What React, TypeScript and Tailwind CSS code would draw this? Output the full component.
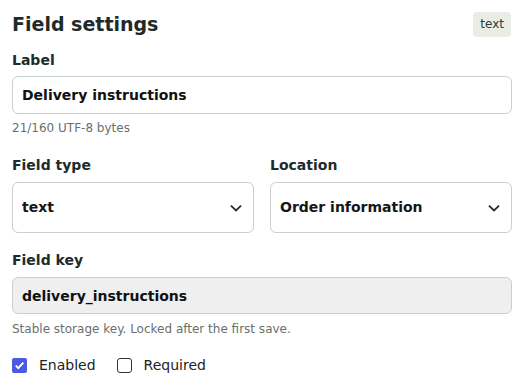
import React from "react";

function Chevron() {
  return (
    <svg width="12" height="8" viewBox="0 0 12 8" className="shrink-0">
      <path d="M0.9 1.6 L6 6.4 L11.1 1.6" fill="none" stroke="#2a2a2a" strokeWidth="1.8" />
    </svg>
  );
}

function Select({ value }: { value: string }) {
  return (
    <div className="h-[51px] rounded-[6px] border border-[#c8d1cd] bg-white pl-[9px] pr-[11px] flex items-center justify-between">
      <span className="text-[14px] leading-[20px] font-bold text-[#161616] -mt-[2px]">{value}</span>
      <Chevron />
    </div>
  );
}

export default function App() {
  return (
    <div className="w-[524px] h-[391px] bg-white px-3 pt-[10px] text-[#1e2b2b]" style={{ fontFamily: '"DejaVu Sans", sans-serif' }}>
      <div className="flex items-center justify-between">
        <h1 className="text-[19px] leading-[28px] font-bold text-[#1d2b2b]">Field settings</h1>
        <span className="h-[25px] px-[7px] flex items-center rounded-[4px] bg-[#e8ede6] text-[12px] text-[#2e3a36] mr-[1px]">text</span>
      </div>

      <div className="mt-[12px] text-[14px] leading-[20px] font-bold">Label</div>
      <div className="mt-[6px] h-[38px] rounded-[6px] border border-[#c8d1cd] bg-white pl-[9px] flex items-center">
        <span className="text-[14px] leading-[20px] font-bold text-[#111]">Delivery instructions</span>
      </div>
      <div className="mt-[6px] text-[12px] leading-[16px] text-[#6a6f6d]">21/160 UTF-8 bytes</div>

      <div className="mt-[19px] grid grid-cols-2 gap-4">
        <div>
          <div className="text-[14px] leading-[20px] font-bold">Field type</div>
          <div className="mt-[7px]">
            <Select value="text" />
          </div>
        </div>
        <div>
          <div className="text-[14px] leading-[20px] font-bold">Location</div>
          <div className="mt-[7px]">
            <Select value="Order information" />
          </div>
        </div>
      </div>

      <div className="mt-[17px] text-[14px] leading-[20px] font-bold">Field key</div>
      <div className="mt-[7px] h-[37px] rounded-[6px] border border-[#c8d1cd] bg-[#efefef] pl-[9px] flex items-center">
        <span className="text-[14px] leading-[20px] font-bold text-[#111]">delivery_instructions</span>
      </div>
      <div className="mt-[7px] text-[12px] leading-[16px] text-[#6a6f6d]">Stable storage key. Locked after the first save.</div>

      <div className="mt-[18px] flex items-center text-[14px] leading-[20px] text-[#222]">
        <span className="w-[15px] h-[15px] rounded-[2px] bg-[#4c5be2] flex items-center justify-center">
          <svg width="11" height="11" viewBox="0 0 11 11">
            <path d="M1.8 5.6 L4.3 8.1 L9.3 2.6" fill="none" stroke="#fff" strokeWidth="2" />
          </svg>
        </span>
        <span className="ml-[12px]">Enabled</span>
        <span className="ml-[21px] w-[15px] h-[15px] rounded-[3px] border-[1.5px] border-[#333] bg-white"></span>
        <span className="ml-[12px]">Required</span>
      </div>
    </div>
  );
}
